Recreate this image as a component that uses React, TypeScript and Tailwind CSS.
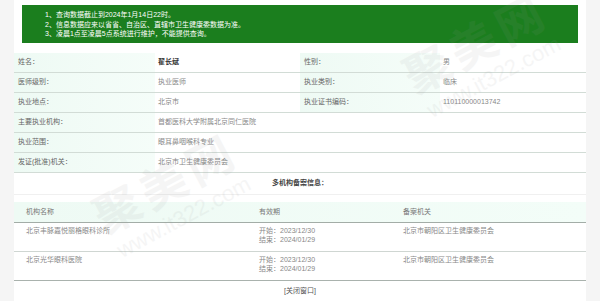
import React from 'react';

const FONT = { fontFamily: '"Liberation Sans", "Noto Sans CJK SC", sans-serif' };

const NOTICE = [
  '1、查询数据截止到2024年1月14日22时。',
  '2、信息数据应来以省省、自治区、直辖市卫生健康委数据为准。',
  '3、凌晨1点至凌晨5点系统进行维护，不能提供查询。',
];

const RECORDS = [
  { org: '北京丰脉嘉悦丽格眼科诊所', start: '2023/12/30', end: '2024/01/29', office: '北京市朝阳区卫生健康委员会' },
  { org: '北京光华眼科医院', start: '2023/12/30', end: '2024/01/29', office: '北京市朝阳区卫生健康委员会' },
];

function Label({ children }: { children: React.ReactNode }) {
  return (
    <div className="flex items-center bg-gradient-to-r from-[#eefaf4] to-[#f5fdf9] pl-[4px] text-[#666]">
      {children}
    </div>
  );
}

function Value({ children, bold }: { children: React.ReactNode; bold?: boolean }) {
  return (
    <div className={`flex items-center bg-white pl-[3px] ${bold ? 'font-bold text-[#333]' : 'text-[#888]'}`}>
      {children}
    </div>
  );
}

// faint site watermark laid over the page
function Watermark({ className }: { className: string }) {
  return (
    <div className={`pointer-events-none absolute flex -rotate-[28deg] flex-col items-center text-[#999] opacity-[0.09] ${className}`}>
      <span className="text-[46px] font-bold leading-none tracking-[6px]">聚美网</span>
      <span className="text-[22px] leading-tight">www.it322.com</span>
    </div>
  );
}

export default function App() {
  return (
    <div className="relative min-h-[301px] overflow-hidden bg-[#f5f5f5]" style={FONT}>
      <div className="mx-[14px] min-h-[301px] bg-white pt-[5px] text-[7px]">
        <div className="mx-[8px] h-[38px] bg-[#1b7e1e] pl-[23px] pt-[5px] text-[7px] leading-[9.7px] text-white">
          {NOTICE.map((line) => (
            <p key={line}>{line}</p>
          ))}
        </div>

        <div className="mt-[10px] grid grid-cols-[141px_145px_140px_1fr]">
          <div className="col-span-4 grid h-[20px] grid-cols-subgrid border-b border-[#d2dcd6]">
            <Label>姓名：</Label>
            <Value bold>翟长斌</Value>
            <Label>性别：</Label>
            <Value>男</Value>
          </div>
          <div className="col-span-4 grid h-[20px] grid-cols-subgrid border-b border-[#d2dcd6]">
            <Label>医师级别：</Label>
            <Value>执业医师</Value>
            <Label>执业类别：</Label>
            <Value>临床</Value>
          </div>
          <div className="col-span-4 grid h-[20px] grid-cols-subgrid border-b border-[#d2dcd6]">
            <Label>执业地点：</Label>
            <Value>北京市</Value>
            <Label>执业证书编码：</Label>
            <Value>110110000013742</Value>
          </div>
          <div className="col-span-4 grid h-[20px] grid-cols-subgrid border-b border-[#d2dcd6]">
            <Label>主要执业机构：</Label>
            <div className="col-span-3 flex items-center pl-[3px] text-[#888]">首都医科大学附属北京同仁医院</div>
          </div>
          <div className="col-span-4 grid h-[20px] grid-cols-subgrid border-b border-[#d2dcd6]">
            <Label>执业范围：</Label>
            <div className="col-span-3 flex items-center pl-[3px] text-[#888]">眼耳鼻咽喉科专业</div>
          </div>
          <div className="col-span-4 grid h-[20px] grid-cols-subgrid border-b border-[#d2dcd6]">
            <Label>发证(批准)机关：</Label>
            <div className="col-span-3 flex items-center pl-[3px] text-[#888]">北京市卫生健康委员会</div>
          </div>
        </div>

        <div className="flex h-[22px] items-center justify-center border-b border-[#f0f0f0] font-bold text-[#444]">
          多机构备案信息：
        </div>

        <div className="mt-[7px]">
          <div className="grid h-[21px] grid-cols-[233px_144px_1fr] items-center border-b border-[#a3ada7] bg-gradient-to-r from-[#eefaf4] to-[#f3fdf8] text-[#777]">
            <span className="pl-[12px]">机构名称</span>
            <span className="pl-[12px]">有效期</span>
            <span className="pl-[12px]">备案机关</span>
          </div>
          {RECORDS.map((r, i) => (
            <div
              key={r.org}
              className={`grid h-[29px] grid-cols-[233px_144px_1fr] border-b pt-[3px] leading-[9px] text-[#888] ${
                i === RECORDS.length - 1 ? 'border-[#a9b2ad]' : 'border-[#cfd6d2]'
              }`}
            >
              <span className="pl-[12px]">{r.org}</span>
              <span className="flex flex-col pl-[12px]">
                <span>开始：{r.start}</span>
                <span>结束：{r.end}</span>
              </span>
              <span className="pl-[12px]">{r.office}</span>
            </div>
          ))}
        </div>

        <div className="flex h-[20px] items-center justify-center text-[#555]">[关闭窗口]</div>
      </div>

      <Watermark className="left-[405px] top-[20px]" />
      <Watermark className="left-[95px] top-[160px]" />
    </div>
  );
}
